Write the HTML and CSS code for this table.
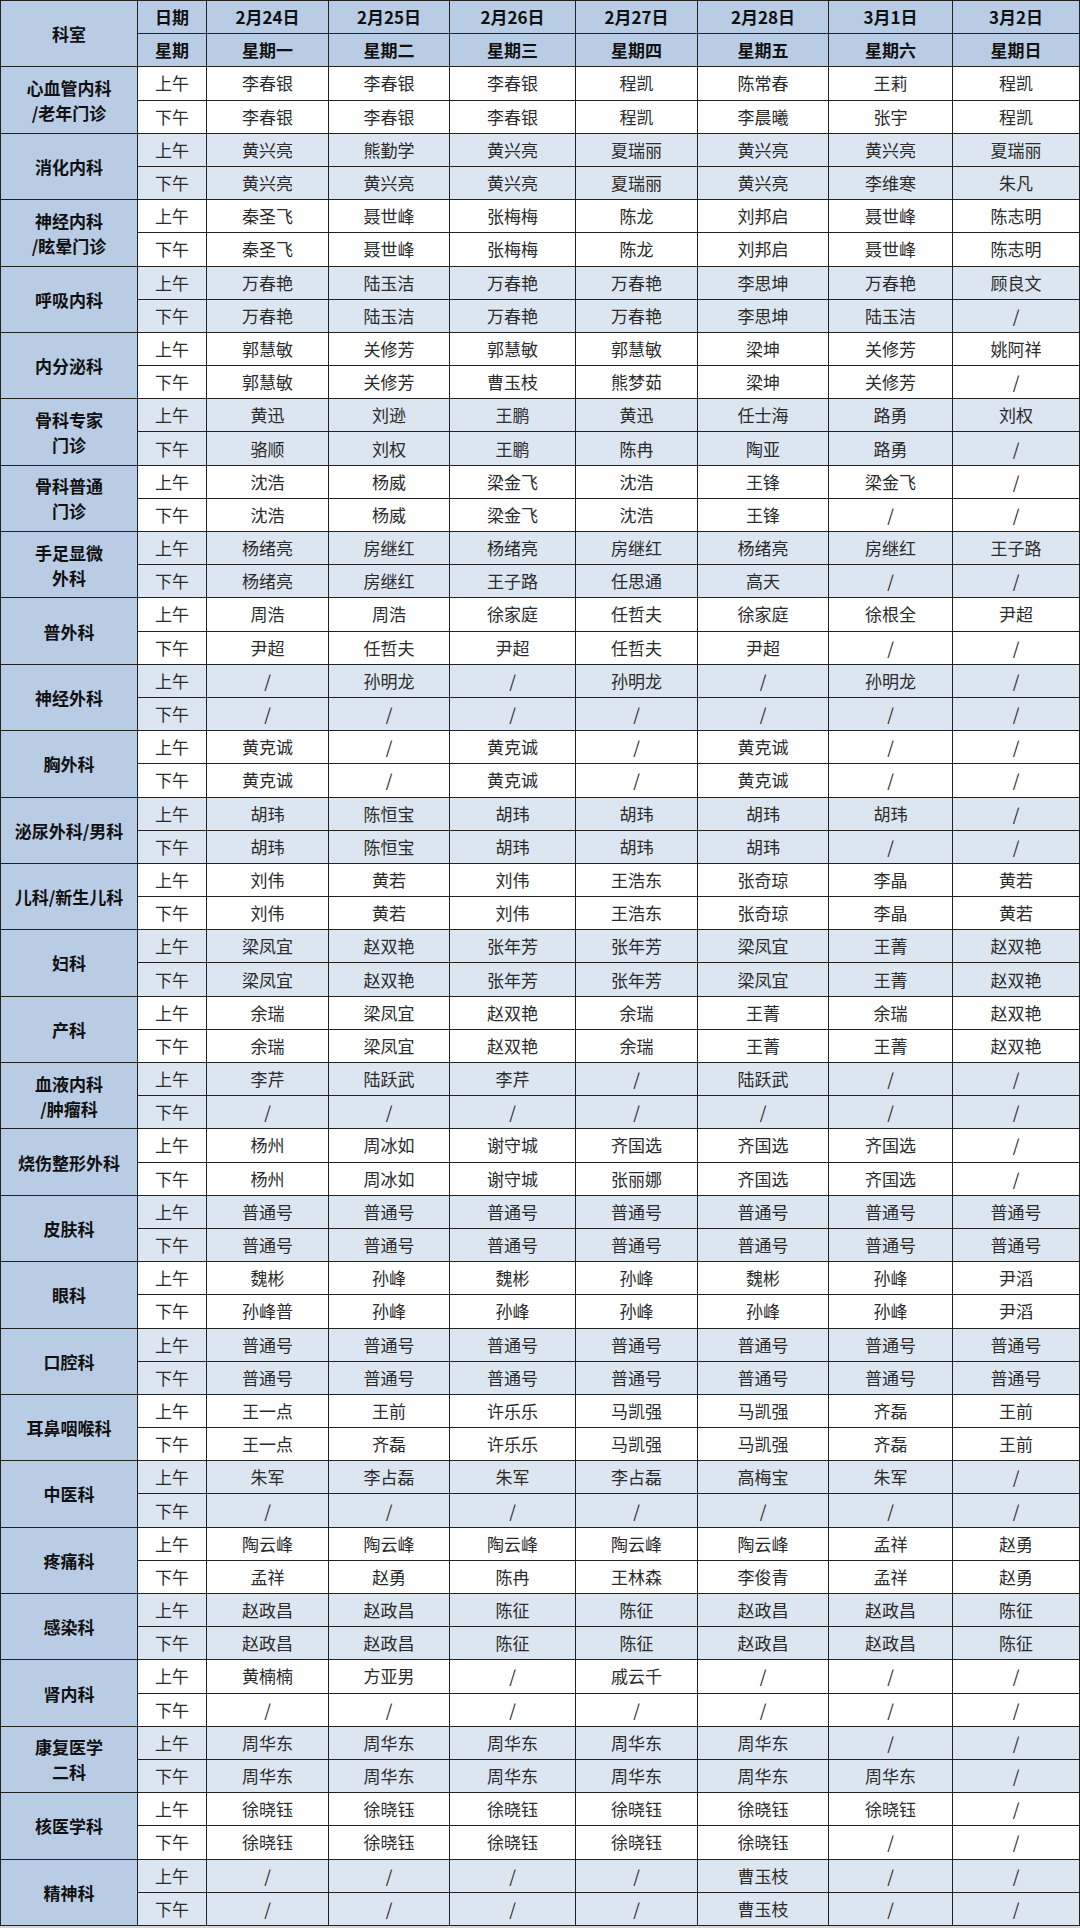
FILE: index.html
```html
<!DOCTYPE html>
<html lang="zh-CN">
<head>
<meta charset="utf-8">
<title>门诊排班表</title>
<link rel="stylesheet" href="styles.css">
</head>
<body>
<table class="sched">
<colgroup>
<col class="c-dept"><col class="c-half"><col class="c1"><col class="c2"><col class="c3"><col class="c4"><col class="c5"><col class="c6"><col class="c7">
</colgroup>
<thead>
<tr><th rowspan="2" class="hd">科室</th><th>日期</th><th>2月24日</th><th>2月25日</th><th>2月26日</th><th>2月27日</th><th>2月28日</th><th>3月1日</th><th>3月2日</th></tr>
<tr><th>星期</th><th>星期一</th><th>星期二</th><th>星期三</th><th>星期四</th><th>星期五</th><th>星期六</th><th>星期日</th></tr>
</thead>
<tbody class="w">
<tr><th rowspan="2" class="dept">心血管内科<br>/老年门诊</th><td>上午</td><td>李春银</td><td>李春银</td><td>李春银</td><td>程凯</td><td>陈常春</td><td>王莉</td><td>程凯</td></tr>
<tr><td>下午</td><td>李春银</td><td>李春银</td><td>李春银</td><td>程凯</td><td>李晨曦</td><td>张宇</td><td>程凯</td></tr>
</tbody>
<tbody class="b">
<tr><th rowspan="2" class="dept">消化内科</th><td>上午</td><td>黄兴亮</td><td>熊勤学</td><td>黄兴亮</td><td>夏瑞丽</td><td>黄兴亮</td><td>黄兴亮</td><td>夏瑞丽</td></tr>
<tr><td>下午</td><td>黄兴亮</td><td>黄兴亮</td><td>黄兴亮</td><td>夏瑞丽</td><td>黄兴亮</td><td>李维寒</td><td>朱凡</td></tr>
</tbody>
<tbody class="w">
<tr><th rowspan="2" class="dept">神经内科<br>/眩晕门诊</th><td>上午</td><td>秦圣飞</td><td>聂世峰</td><td>张梅梅</td><td>陈龙</td><td>刘邦启</td><td>聂世峰</td><td>陈志明</td></tr>
<tr><td>下午</td><td>秦圣飞</td><td>聂世峰</td><td>张梅梅</td><td>陈龙</td><td>刘邦启</td><td>聂世峰</td><td>陈志明</td></tr>
</tbody>
<tbody class="b">
<tr><th rowspan="2" class="dept">呼吸内科</th><td>上午</td><td>万春艳</td><td>陆玉洁</td><td>万春艳</td><td>万春艳</td><td>李思坤</td><td>万春艳</td><td>顾良文</td></tr>
<tr><td>下午</td><td>万春艳</td><td>陆玉洁</td><td>万春艳</td><td>万春艳</td><td>李思坤</td><td>陆玉洁</td><td>/</td></tr>
</tbody>
<tbody class="w">
<tr><th rowspan="2" class="dept">内分泌科</th><td>上午</td><td>郭慧敏</td><td>关修芳</td><td>郭慧敏</td><td>郭慧敏</td><td>梁坤</td><td>关修芳</td><td>姚阿祥</td></tr>
<tr><td>下午</td><td>郭慧敏</td><td>关修芳</td><td>曹玉枝</td><td>熊梦茹</td><td>梁坤</td><td>关修芳</td><td>/</td></tr>
</tbody>
<tbody class="b">
<tr><th rowspan="2" class="dept">骨科专家<br>门诊</th><td>上午</td><td>黄迅</td><td>刘逊</td><td>王鹏</td><td>黄迅</td><td>任士海</td><td>路勇</td><td>刘权</td></tr>
<tr><td>下午</td><td>骆顺</td><td>刘权</td><td>王鹏</td><td>陈冉</td><td>陶亚</td><td>路勇</td><td>/</td></tr>
</tbody>
<tbody class="w">
<tr><th rowspan="2" class="dept">骨科普通<br>门诊</th><td>上午</td><td>沈浩</td><td>杨威</td><td>梁金飞</td><td>沈浩</td><td>王锋</td><td>梁金飞</td><td>/</td></tr>
<tr><td>下午</td><td>沈浩</td><td>杨威</td><td>梁金飞</td><td>沈浩</td><td>王锋</td><td>/</td><td>/</td></tr>
</tbody>
<tbody class="b">
<tr><th rowspan="2" class="dept">手足显微<br>外科</th><td>上午</td><td>杨绪亮</td><td>房继红</td><td>杨绪亮</td><td>房继红</td><td>杨绪亮</td><td>房继红</td><td>王子路</td></tr>
<tr><td>下午</td><td>杨绪亮</td><td>房继红</td><td>王子路</td><td>任思通</td><td>高天</td><td>/</td><td>/</td></tr>
</tbody>
<tbody class="w">
<tr><th rowspan="2" class="dept">普外科</th><td>上午</td><td>周浩</td><td>周浩</td><td>徐家庭</td><td>任哲夫</td><td>徐家庭</td><td>徐根全</td><td>尹超</td></tr>
<tr><td>下午</td><td>尹超</td><td>任哲夫</td><td>尹超</td><td>任哲夫</td><td>尹超</td><td>/</td><td>/</td></tr>
</tbody>
<tbody class="b">
<tr><th rowspan="2" class="dept">神经外科</th><td>上午</td><td>/</td><td>孙明龙</td><td>/</td><td>孙明龙</td><td>/</td><td>孙明龙</td><td>/</td></tr>
<tr><td>下午</td><td>/</td><td>/</td><td>/</td><td>/</td><td>/</td><td>/</td><td>/</td></tr>
</tbody>
<tbody class="w">
<tr><th rowspan="2" class="dept">胸外科</th><td>上午</td><td>黄克诚</td><td>/</td><td>黄克诚</td><td>/</td><td>黄克诚</td><td>/</td><td>/</td></tr>
<tr><td>下午</td><td>黄克诚</td><td>/</td><td>黄克诚</td><td>/</td><td>黄克诚</td><td>/</td><td>/</td></tr>
</tbody>
<tbody class="b">
<tr><th rowspan="2" class="dept">泌尿外科/男科</th><td>上午</td><td>胡玮</td><td>陈恒宝</td><td>胡玮</td><td>胡玮</td><td>胡玮</td><td>胡玮</td><td>/</td></tr>
<tr><td>下午</td><td>胡玮</td><td>陈恒宝</td><td>胡玮</td><td>胡玮</td><td>胡玮</td><td>/</td><td>/</td></tr>
</tbody>
<tbody class="w">
<tr><th rowspan="2" class="dept">儿科/新生儿科</th><td>上午</td><td>刘伟</td><td>黄若</td><td>刘伟</td><td>王浩东</td><td>张奇琼</td><td>李晶</td><td>黄若</td></tr>
<tr><td>下午</td><td>刘伟</td><td>黄若</td><td>刘伟</td><td>王浩东</td><td>张奇琼</td><td>李晶</td><td>黄若</td></tr>
</tbody>
<tbody class="b">
<tr><th rowspan="2" class="dept">妇科</th><td>上午</td><td>梁凤宜</td><td>赵双艳</td><td>张年芳</td><td>张年芳</td><td>梁凤宜</td><td>王菁</td><td>赵双艳</td></tr>
<tr><td>下午</td><td>梁凤宜</td><td>赵双艳</td><td>张年芳</td><td>张年芳</td><td>梁凤宜</td><td>王菁</td><td>赵双艳</td></tr>
</tbody>
<tbody class="w">
<tr><th rowspan="2" class="dept">产科</th><td>上午</td><td>余瑞</td><td>梁凤宜</td><td>赵双艳</td><td>余瑞</td><td>王菁</td><td>余瑞</td><td>赵双艳</td></tr>
<tr><td>下午</td><td>余瑞</td><td>梁凤宜</td><td>赵双艳</td><td>余瑞</td><td>王菁</td><td>王菁</td><td>赵双艳</td></tr>
</tbody>
<tbody class="b">
<tr><th rowspan="2" class="dept">血液内科<br>/肿瘤科</th><td>上午</td><td>李芹</td><td>陆跃武</td><td>李芹</td><td>/</td><td>陆跃武</td><td>/</td><td>/</td></tr>
<tr><td>下午</td><td>/</td><td>/</td><td>/</td><td>/</td><td>/</td><td>/</td><td>/</td></tr>
</tbody>
<tbody class="w">
<tr><th rowspan="2" class="dept">烧伤整形外科</th><td>上午</td><td>杨州</td><td>周冰如</td><td>谢守城</td><td>齐国选</td><td>齐国选</td><td>齐国选</td><td>/</td></tr>
<tr><td>下午</td><td>杨州</td><td>周冰如</td><td>谢守城</td><td>张丽娜</td><td>齐国选</td><td>齐国选</td><td>/</td></tr>
</tbody>
<tbody class="b">
<tr><th rowspan="2" class="dept">皮肤科</th><td>上午</td><td>普通号</td><td>普通号</td><td>普通号</td><td>普通号</td><td>普通号</td><td>普通号</td><td>普通号</td></tr>
<tr><td>下午</td><td>普通号</td><td>普通号</td><td>普通号</td><td>普通号</td><td>普通号</td><td>普通号</td><td>普通号</td></tr>
</tbody>
<tbody class="w">
<tr><th rowspan="2" class="dept">眼科</th><td>上午</td><td>魏彬</td><td>孙峰</td><td>魏彬</td><td>孙峰</td><td>魏彬</td><td>孙峰</td><td>尹滔</td></tr>
<tr><td>下午</td><td>孙峰普</td><td>孙峰</td><td>孙峰</td><td>孙峰</td><td>孙峰</td><td>孙峰</td><td>尹滔</td></tr>
</tbody>
<tbody class="b">
<tr><th rowspan="2" class="dept">口腔科</th><td>上午</td><td>普通号</td><td>普通号</td><td>普通号</td><td>普通号</td><td>普通号</td><td>普通号</td><td>普通号</td></tr>
<tr><td>下午</td><td>普通号</td><td>普通号</td><td>普通号</td><td>普通号</td><td>普通号</td><td>普通号</td><td>普通号</td></tr>
</tbody>
<tbody class="w">
<tr><th rowspan="2" class="dept">耳鼻咽喉科</th><td>上午</td><td>王一点</td><td>王前</td><td>许乐乐</td><td>马凯强</td><td>马凯强</td><td>齐磊</td><td>王前</td></tr>
<tr><td>下午</td><td>王一点</td><td>齐磊</td><td>许乐乐</td><td>马凯强</td><td>马凯强</td><td>齐磊</td><td>王前</td></tr>
</tbody>
<tbody class="b">
<tr><th rowspan="2" class="dept">中医科</th><td>上午</td><td>朱军</td><td>李占磊</td><td>朱军</td><td>李占磊</td><td>高梅宝</td><td>朱军</td><td>/</td></tr>
<tr><td>下午</td><td>/</td><td>/</td><td>/</td><td>/</td><td>/</td><td>/</td><td>/</td></tr>
</tbody>
<tbody class="w">
<tr><th rowspan="2" class="dept">疼痛科</th><td>上午</td><td>陶云峰</td><td>陶云峰</td><td>陶云峰</td><td>陶云峰</td><td>陶云峰</td><td>孟祥</td><td>赵勇</td></tr>
<tr><td>下午</td><td>孟祥</td><td>赵勇</td><td>陈冉</td><td>王林森</td><td>李俊青</td><td>孟祥</td><td>赵勇</td></tr>
</tbody>
<tbody class="b">
<tr><th rowspan="2" class="dept">感染科</th><td>上午</td><td>赵政昌</td><td>赵政昌</td><td>陈征</td><td>陈征</td><td>赵政昌</td><td>赵政昌</td><td>陈征</td></tr>
<tr><td>下午</td><td>赵政昌</td><td>赵政昌</td><td>陈征</td><td>陈征</td><td>赵政昌</td><td>赵政昌</td><td>陈征</td></tr>
</tbody>
<tbody class="w">
<tr><th rowspan="2" class="dept">肾内科</th><td>上午</td><td>黄楠楠</td><td>方亚男</td><td>/</td><td>戚云千</td><td>/</td><td>/</td><td>/</td></tr>
<tr><td>下午</td><td>/</td><td>/</td><td>/</td><td>/</td><td>/</td><td>/</td><td>/</td></tr>
</tbody>
<tbody class="b">
<tr><th rowspan="2" class="dept">康复医学<br>二科</th><td>上午</td><td>周华东</td><td>周华东</td><td>周华东</td><td>周华东</td><td>周华东</td><td>/</td><td>/</td></tr>
<tr><td>下午</td><td>周华东</td><td>周华东</td><td>周华东</td><td>周华东</td><td>周华东</td><td>周华东</td><td>/</td></tr>
</tbody>
<tbody class="w">
<tr><th rowspan="2" class="dept">核医学科</th><td>上午</td><td>徐晓钰</td><td>徐晓钰</td><td>徐晓钰</td><td>徐晓钰</td><td>徐晓钰</td><td>徐晓钰</td><td>/</td></tr>
<tr><td>下午</td><td>徐晓钰</td><td>徐晓钰</td><td>徐晓钰</td><td>徐晓钰</td><td>徐晓钰</td><td>/</td><td>/</td></tr>
</tbody>
<tbody class="b">
<tr><th rowspan="2" class="dept">精神科</th><td>上午</td><td>/</td><td>/</td><td>/</td><td>/</td><td>曹玉枝</td><td>/</td><td>/</td></tr>
<tr><td>下午</td><td>/</td><td>/</td><td>/</td><td>/</td><td>曹玉枝</td><td>/</td><td>/</td></tr>
</tbody>
</table>
</body>
</html>
```
FILE: styles.css
```css
html, body {
  margin: 0;
  padding: 0;
}
body {
  background: #d4d4d4;
  font-family: "Noto Sans CJK SC", "Noto Sans", sans-serif;
  font-size: 17px;
  color: #2b2b2b;
}
.sched {
  border-collapse: collapse;
  table-layout: fixed;
  width: 1079px;
  background: #ffffff;
}
.c-dept { width: 137px; }
.c-half { width: 69px; }
.c1 { width: 122px; }
.c2 { width: 121px; }
.c3 { width: 126px; }
.c4 { width: 122px; }
.c5 { width: 131px; }
.c6 { width: 124px; }
.c7 { width: 127px; }
.sched tr {
  height: 33.2px;
}
.sched th,
.sched td {
  border: 1px solid #222222;
  padding: 0;
  text-align: center;
  vertical-align: middle;
  line-height: 20px;
  white-space: nowrap;
}
.sched thead th {
  background: #b8cce4;
  font-weight: 700;
  color: #111111;
}
.sched th.dept {
  background: #b8cce4;
  font-weight: 700;
  color: #111111;
  line-height: 25px;
}
.sched tbody.w td {
  background: #ffffff;
}
.sched tbody.b td {
  background: #dce6f1;
}
```
